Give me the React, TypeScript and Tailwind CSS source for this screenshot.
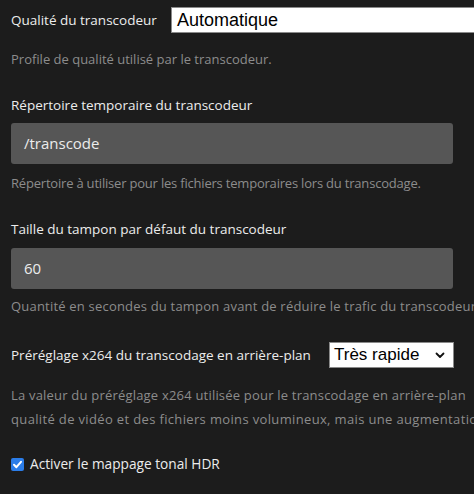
import React from "react";

const font = { fontFamily: '"Open Sans", "Noto Sans", sans-serif' };

function Chevron() {
  return (
    <svg width="10" height="7" viewBox="0 0 10 7" className="shrink-0">
      <path d="M1.5 1.5 L5 5 L8.5 1.5" fill="none" stroke="#111" strokeWidth="1.8" strokeLinecap="round" strokeLinejoin="round" />
    </svg>
  );
}

export default function App() {
  return (
    <div className="w-[474px] h-[494px] overflow-hidden bg-[#1c1c1c]">
      <div className="w-[640px] pl-[11px] pt-[7px] text-[13.5px] text-[#ececec]" style={font}>
        <div className="flex items-center h-[26px]">
          <span className="leading-[20px] w-[160px] shrink-0">Qualité du transcodeur</span>
          <div className="h-[26px] w-[400px] bg-white border border-[#8a8a8a] flex items-center pl-[5px] text-[18px] text-black" style={{ fontFamily: '"Liberation Sans", Arial, sans-serif' }}>
            Automatique
          </div>
        </div>
        <div className="mt-[16px] leading-[20px] text-[13px] text-[#8c8c8c]">Profile de qualité utilisé par le transcodeur.</div>

        <div className="mt-[26px] leading-[20px]">Répertoire temporaire du transcodeur</div>
        <div className="mt-[8px] w-[442px] h-[41px] rounded-[3px] bg-[#565656] flex items-center pl-[13px] text-[15px] text-[#ececec]">/transcode</div>
        <div className="mt-[9px] leading-[20px] text-[13px] tracking-[-0.2px] text-[#8c8c8c] whitespace-nowrap">Répertoire à utiliser pour les fichiers temporaires lors du transcodage.</div>

        <div className="mt-[26px] leading-[20px]">Taille du tampon par défaut du transcodeur</div>
        <div className="mt-[9px] w-[442px] h-[41px] rounded-[3px] bg-[#565656] flex items-center pl-[13px] text-[15px] text-[#ececec]">60</div>
        <div className="mt-[7px] leading-[20px] text-[13px] tracking-[0.2px] text-[#8c8c8c] whitespace-nowrap">Quantité en secondes du tampon avant de réduire le trafic du transcodeur.</div>

        <div className="mt-[26px] flex items-center h-[26px]">
          <span className="leading-[20px] w-[318px] shrink-0">Préréglage x264 du transcodage en arrière-plan</span>
          <div className="h-[26px] w-[125px] bg-white border border-[#8a8a8a] flex items-center justify-between pl-[4px] pr-[8px] text-[17px] text-black" style={{ fontFamily: '"Liberation Sans", Arial, sans-serif' }}>
            <span>Très rapide</span>
            <Chevron />
          </div>
        </div>
        <div className="mt-[15px] leading-[24px] text-[13px] tracking-[0.2px] text-[#8c8c8c] whitespace-nowrap">
          <div>La valeur du préréglage x264 utilisée pour le transcodage en arrière-plan</div>
          <div className="tracking-[0.35px]">qualité de vidéo et des fichiers moins volumineux, mais une augmentation</div>
        </div>

        <div className="mt-[23px] flex items-center h-[20px] gap-[6px]">
          <div className="w-[13px] h-[13px] rounded-[2px] bg-[#2b7de9] flex items-center justify-center">
            <svg width="11" height="11" viewBox="0 0 11 11">
              <path d="M2 5.8 L4.4 8.2 L9 2.8" fill="none" stroke="white" strokeWidth="2" strokeLinecap="round" strokeLinejoin="round" />
            </svg>
          </div>
          <span className="text-[13.7px] leading-[20px]">Activer le mappage tonal HDR</span>
        </div>
      </div>
    </div>
  );
}
